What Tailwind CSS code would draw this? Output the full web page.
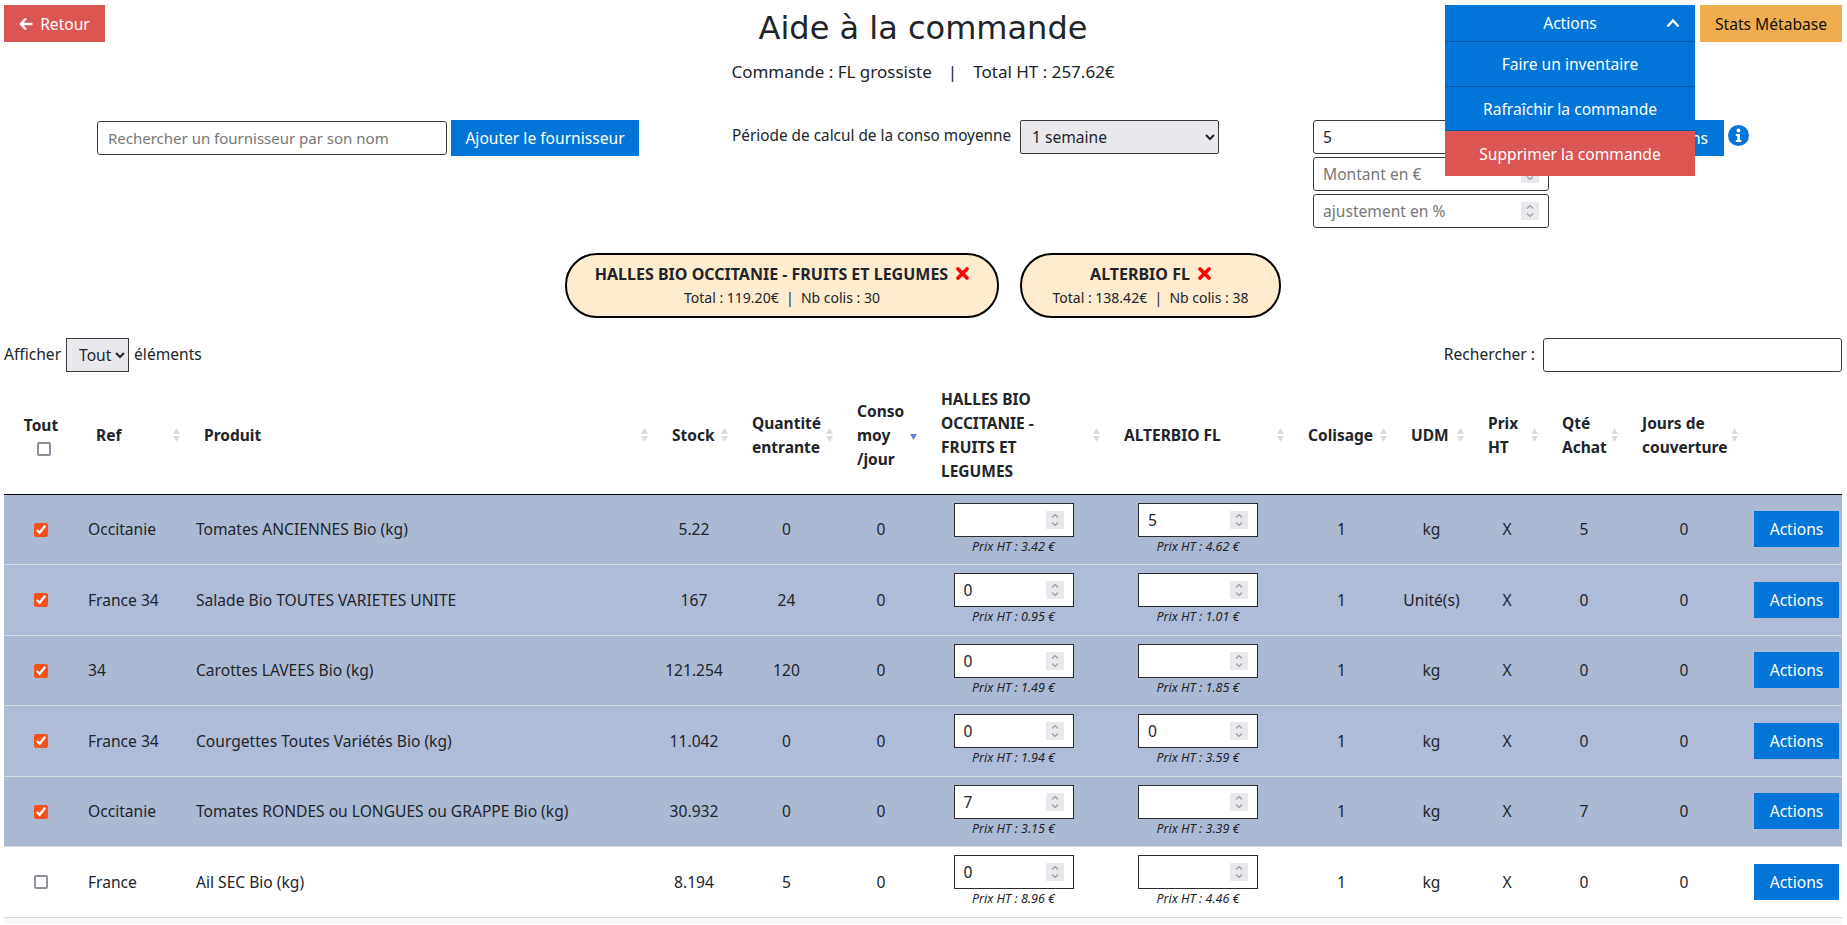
<!DOCTYPE html>
<html lang="fr">

<head>
    <meta charset="UTF-8">
    <meta name="viewport" content="width=device-width, initial-scale=1.0">
    <title>Aide à la commande</title>
    <script src="https://cdn.jsdelivr.net/npm/@tailwindcss/browser@4"></script>
</head>

<body class="h-screen overflow-hidden bg-white pl-[4px] pr-[5px] font-['Noto_Sans',sans-serif] text-[15.6px] leading-6 text-[#212529]">

    <!-- Entete -->
    <header class="grid grid-cols-[1fr_auto_1fr] pt-[5px]">
        <div>
            <button class="flex h-[37px] w-[101px] items-center justify-center gap-[7px] bg-[#db5552] text-white">
                <svg class="h-[14px] w-[14px]" viewBox="0 0 14 14" fill="none" stroke="currentColor" stroke-width="2.4"><path d="M7 1.5 1.8 7 7 12.5M2 7h11.5"/></svg>
                Retour
            </button>
        </div>
        <div class="text-center">
            <h1 class="mt-[-1px] font-['DejaVu_Sans',sans-serif] text-[32px] leading-[48px]">Aide à la commande</h1>
            <p class="mt-[8px] flex justify-center gap-[16px] text-[17px]"><span>Commande : FL grossiste</span><span>|</span><span>Total HT : 257.62€</span></p>
        </div>
        <div class="flex justify-end gap-[5px]">
            <!-- Menu Actions ouvert -->
            <div class="relative h-[37px] w-[250px]">
                <div class="absolute left-0 top-0 z-10 w-[250px] bg-[#0275d8] text-center text-white">
                    <button class="relative flex h-[37px] w-full items-center justify-center border-b border-[#0359a5]">
                        Actions
                        <svg class="absolute right-[15px] top-[13px] h-[10px] w-[14px]" viewBox="0 0 14 10" fill="none" stroke="currentColor" stroke-width="2.4"><path d="M1.5 8.5 7 2.5l5.5 6"/></svg>
                    </button>
                    <a class="flex h-[45px] items-center justify-center border-b border-[#0359a5]">Faire un inventaire</a>
                    <a class="flex h-[44px] items-center justify-center border-b border-[#0359a5]">Rafraîchir la commande</a>
                    <a class="flex h-[45px] items-center justify-center bg-[#db5552]">Supprimer la commande</a>
                </div>
            </div>
            <button class="h-[37px] w-[142px] bg-[#f0ad4e] text-[#111]">Stats Métabase</button>
        </div>
    </header>

    <!-- Filtres -->
    <section class="mt-[36px] grid grid-cols-[728px_581px_1fr]">
        <div class="flex items-center gap-[4px] self-start pl-[93px]">
            <input type="text" placeholder="Rechercher un fournisseur par son nom" class="h-[34px] w-[350px] rounded-[3px] border border-[#3b3b3b] px-[10px] text-[15px] placeholder:text-[#777]">
            <button class="h-[36px] w-[188px] bg-[#0275d8] text-white">Ajouter le fournisseur</button>
        </div>
        <div class="flex items-start">
            <label class="w-[288px] pt-[3px] text-[15.35px]">Période de calcul de la conso moyenne</label>
            <select class="h-[34px] w-[199px] rounded-[2px] border border-[#3b3b3b] bg-[#e9e9ed] px-[7px]">
                <option>1 semaine</option>
            </select>
        </div>
        <div class="flex flex-col gap-[3px]">
            <div class="flex h-[34px] items-start gap-[4px]">
                <div class="flex h-[34px] w-[236px] items-center rounded-[3px] border border-[#3b3b3b] px-[9px]">5</div>
                <button class="h-[36px] w-[171px] bg-[#0275d8] pr-[16px] text-right text-white">Suggestions</button>
                <svg class="mt-[5px] h-[21px] w-[21px]" viewBox="0 0 21 21"><circle cx="10.5" cy="10.5" r="10.5" fill="#0275d8"/><circle cx="10.5" cy="5.6" r="2" fill="#fff"/><path d="M7.8 9h4.2v6h1.4v2H7.8v-2h1.4v-4H7.8z" fill="#fff"/></svg>
            </div>
            <div class="flex h-[34px] w-[236px] items-center justify-between rounded-[3px] border border-[#3b3b3b] pl-[9px] pr-[9px] text-[#777]">Montant en €
                <svg class="h-[18px] w-[18px] bg-[#e9e9ed]" viewBox="0 0 18 18" fill="none" stroke="#9a9aa2" stroke-width="1.2"><path d="M6 6.5 9 3.5l3 3M6 11.5l3 3 3-3"/></svg>
            </div>
            <div class="flex h-[34px] w-[236px] items-center justify-between rounded-[3px] border border-[#3b3b3b] pl-[9px] pr-[9px] text-[#777]">ajustement en %
                <svg class="h-[18px] w-[18px] bg-[#e9e9ed]" viewBox="0 0 18 18" fill="none" stroke="#9a9aa2" stroke-width="1.2"><path d="M6 6.5 9 3.5l3 3M6 11.5l3 3 3-3"/></svg>
            </div>
        </div>
    </section>

    <!-- Fournisseurs selectionnes -->
    <section class="mt-[25px] flex justify-center gap-[21px]">
        <div class="flex h-[65px] w-[434px] flex-col items-center justify-center rounded-[32px] border-2 border-black bg-[#ffebcd]">
            <div class="flex items-center gap-[8px] text-[16px] font-bold">HALLES BIO OCCITANIE - FRUITS ET LEGUMES
                <svg class="h-[13px] w-[13px]" viewBox="0 0 13 13" stroke="#f00" stroke-width="3.6" stroke-linecap="round"><path d="M2 2l9 9M11 2l-9 9"/></svg>
            </div>
            <div class="whitespace-pre text-[14px]">Total : 119.20€  |  Nb colis : 30</div>
        </div>
        <div class="flex h-[65px] w-[261px] flex-col items-center justify-center rounded-[32px] border-2 border-black bg-[#ffebcd]">
            <div class="flex items-center gap-[8px] text-[16px] font-bold">ALTERBIO FL
                <svg class="h-[13px] w-[13px]" viewBox="0 0 13 13" stroke="#f00" stroke-width="3.6" stroke-linecap="round"><path d="M2 2l9 9M11 2l-9 9"/></svg>
            </div>
            <div class="whitespace-pre text-[14px]">Total : 138.42€  |  Nb colis : 38</div>
        </div>
    </section>

    <!-- Longueur + recherche -->
    <section class="mt-[20px] flex h-[34px] items-center justify-between">
        <div class="flex items-center gap-[5px]">
            <span class="pb-[3px]">Afficher</span>
            <select class="h-[34px] w-[63px] border border-[#3b3b3b] bg-[#e9e9ed] pl-[8px]"><option>Tout</option></select>
            <span class="pb-[3px]">éléments</span>
        </div>
        <div class="flex items-center gap-[8px]">
            <span class="pb-[3px]">Rechercher :</span>
            <input type="text" class="h-[34px] w-[299px] rounded-[3px] border border-[#3b3b3b]">
        </div>
    </section>

    <!-- Tableau -->
    <table class="w-[1838px] table-fixed border-collapse">
        <colgroup>
            <col class="w-[74px]"><col class="w-[108px]"><col class="w-[468px]"><col class="w-[80px]"><col class="w-[105px]"><col class="w-[84px]"><col class="w-[183px]"><col class="w-[184px]"><col class="w-[103px]"><col class="w-[77px]"><col class="w-[74px]"><col class="w-[80px]"><col class="w-[120px]"><col class="w-[98px]">
        </colgroup>
        <thead>
            <tr id="head-row" class="h-[122px] border-b border-black text-left text-[15.5px] font-bold">
                <th class="pt-[4px] text-center"><div>Tout</div><input type="checkbox" class="ml-[33px] mt-[5px] block h-[14px] w-[14px] appearance-none rounded-[2px] border-2 border-[#8f8f9d]"></th>
            </tr>
        </thead>
        <tbody id="rows"></tbody>
    </table>

    <script>
        // En-tetes avec fleches de tri
        const headers = [
            { label: 'Ref' },
            { label: 'Produit' },
            { label: 'Stock' },
            { label: 'Quantité<br>entrante' },
            { label: 'Conso<br>moy<br>/jour', sorted: true },
            { label: 'HALLES BIO<br>OCCITANIE -<br>FRUITS ET<br>LEGUMES' },
            { label: 'ALTERBIO FL' },
            { label: 'Colisage' },
            { label: 'UDM' },
            { label: 'Prix<br>HT' },
            { label: 'Qté<br>Achat' },
            { label: 'Jours de<br>couverture' },
            { label: '', none: true },
        ];

        const sortIcon = `<svg class="absolute right-[6px] top-[56px] h-[14px] w-[7px]" viewBox="0 0 7 14" fill="#dcdcdc"><path d="M3.5 0 7 6H0zM0 8h7l-3.5 6z"/></svg>`;
        const sortedIcon = `<svg class="absolute right-[6px] top-[62px] h-[6px] w-[7px]" viewBox="0 0 7 6" fill="#6f7fe0"><path d="M0 0h7L3.5 6z"/></svg>`;

        const headRow = document.getElementById('head-row');
        headers.forEach(h => {
            const th = document.createElement('th');
            th.className = 'relative pl-[18px] pr-[14px] pt-[4px] font-bold';
            th.innerHTML = h.label + (h.none ? '' : h.sorted ? sortedIcon : sortIcon);
            headRow.appendChild(th);
        });

        // Lignes produits
        const products = [
            ['Occitanie', 'Tomates ANCIENNES Bio (kg)', '5.22', '0', '', '3.42', '5', '4.62', 'kg', '5', true, 'bg-[#acb9d3]'],
            ['France 34', 'Salade Bio TOUTES VARIETES UNITE', '167', '24', '0', '0.95', '', '1.01', 'Unité(s)', '0', true, 'bg-[#afbcd8]'],
            ['34', 'Carottes LAVEES Bio (kg)', '121.254', '120', '0', '1.49', '', '1.85', 'kg', '0', true, 'bg-[#acb9d3]'],
            ['France 34', 'Courgettes Toutes Variétés Bio (kg)', '11.042', '0', '0', '1.94', '0', '3.59', 'kg', '0', true, 'bg-[#afbcd8]'],
            ['Occitanie', 'Tomates RONDES ou LONGUES ou GRAPPE Bio (kg)', '30.932', '0', '7', '3.15', '', '3.39', 'kg', '7', true, 'bg-[#acb9d3]'],
            ['France', 'Ail SEC Bio (kg)', '8.194', '5', '0', '8.96', '', '4.46', 'kg', '0', false, 'bg-white'],
        ];

        function priceCell(value, price, cls) {
            return `<td class="text-center ${cls}">
                <div class="mx-auto flex h-[34px] w-[120px] items-center border border-[#2b2b2b] bg-white pl-[9px] pr-[9px] text-left">${value}
                    <svg class="ml-auto h-[18px] w-[18px] bg-[#e9e9ed]" viewBox="0 0 18 18" fill="none" stroke="#9a9aa2" stroke-width="1.2"><path d="M6 6.5 9 3.5l3 3M6 11.5l3 3 3-3"/></svg>
                </div>
                <div class="mt-[1px] text-[12.5px] italic leading-[18px]">Prix HT : ${price} €</div>
            </td>`;
        }

        const tbody = document.getElementById('rows');
        products.forEach(p => {
            const tr = document.createElement('tr');
            tr.className = 'h-[70.5px] border-b border-[#d5d9e2] ' + p[11];
            const box = p[10]
                ? '<input type="checkbox" checked class="mt-[1px] block h-[14px] w-[14px] accent-[#f4511e]">'
                : '<input type="checkbox" class="mt-[1px] block h-[14px] w-[14px] appearance-none rounded-[2px] border-2 border-[#8f8f9d]">';
            tr.innerHTML = `
                <td class="pl-[30px]">${box}</td>
                <td class="pl-[10px]">${p[0]}</td>
                <td class="pl-[10px]">${p[1]}</td>
                <td class="text-center">${p[2]}</td>
                <td class="text-center">${p[3]}</td>
                <td class="text-center">0</td>
                ${priceCell(p[4], p[5], 'pr-[2px]')}
                ${priceCell(p[6], p[7], '')}
                <td class="text-center">1</td>
                <td class="text-center">${p[8]}</td>
                <td class="text-center">X</td>
                <td class="text-center">${p[9]}</td>
                <td class="text-center">0</td>
                <td class="pl-[10px]"><button class="h-[36px] w-[85px] bg-[#0275d8] text-white">Actions</button></td>`;
            tbody.appendChild(tr);
        });

        // Debut de la ligne suivante, coupee par le bas de la fenetre
        const nextRow = document.createElement('tr');
        nextRow.className = 'h-[7px] bg-[#f8f8f8]';
        nextRow.innerHTML = '<td colspan="14"></td>';
        tbody.appendChild(nextRow);
    </script>
</body>

</html>
